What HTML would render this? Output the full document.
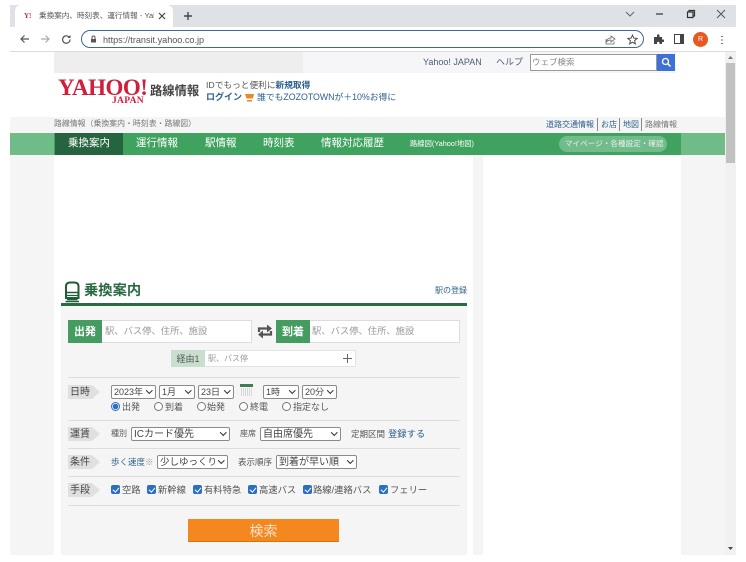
<!DOCTYPE html>
<html lang="ja"><head><meta charset="utf-8"><title>乗換案内</title>
<style>
html,body{margin:0;padding:0;background:#fff}
#p{position:relative;width:746px;height:562px;overflow:hidden;background:#fff;font-family:"Liberation Sans","Noto Sans CJK JP",sans-serif;color:#555;filter:blur(.3px)}
#p div,#p span.t,#p svg{position:absolute}
.t{position:absolute;white-space:nowrap;line-height:14px;font-size:9px;height:14px}
.l{color:#2b5f8e}
.s{background:#fff;border:1px solid #8a8a8a;border-radius:2px;box-sizing:border-box;height:14px;font-size:9px;line-height:13px;padding-left:2px;color:#444;white-space:nowrap;overflow:hidden}
.s:after{content:"";position:absolute;right:4px;top:2px;width:3.500px;height:3.500px;border-right:1.500px solid #333;border-bottom:1.500px solid #333;transform:rotate(45deg)}
.w{font-size:10px}
.tag{background:#e0e0e0;height:14px;width:24px;left:68px;font-size:10px;line-height:15px;text-align:center;color:#444}
.tag:after{content:"";position:absolute;left:24px;top:0;border-left:8px solid #e0e0e0;border-top:7px solid transparent;border-bottom:7px solid transparent}
.hr{left:68px;width:392px;height:1px;background:#dcdcdc}
.r{width:7px;height:7px;border:1px solid #777;border-radius:50%;background:#fff;top:402px;box-sizing:content-box}
.c{width:9px;height:9px;background:#2a6fc4;border-radius:2px;top:485px}
.c:after{content:"";position:absolute;left:3px;top:1px;width:2.500px;height:5px;border-right:1.500px solid #fff;border-bottom:1.500px solid #fff;transform:rotate(40deg)}
.n{color:#fff;font-size:10.500px;top:136px;line-height:14px}
</style></head><body><div id="p">

<!-- chrome -->
<div style="left:10px;top:5px;width:726px;height:22px;background:#dee1e6"></div>
<div style="left:15px;top:5px;width:158px;height:22px;background:#fff;border-radius:6px 6px 0 0"></div>
<span class="t" style="left:24px;top:9px;font:bold 7px/14px 'Liberation Serif',serif;color:#d3203d">Y!</span>
<span class="t" style="left:39px;top:9px;font-size:7.600px;color:#555;width:115px;overflow:hidden">乗換案内、時刻表、運行情報 - Yal</span>
<svg style="left:158px;top:12px" width="8" height="8"><path d="M1 1L7 7M7 1L1 7" stroke="#444" stroke-width="1.200"/></svg>
<svg style="left:183px;top:11px" width="10" height="10"><path d="M5 1V9M1 5H9" stroke="#444" stroke-width="1.400"/></svg>
<svg style="left:625px;top:10px" width="10" height="8"><path d="M1 2L5 6L9 2" stroke="#666" fill="none"/></svg>
<svg style="left:655px;top:10px" width="10" height="8"><path d="M1 4H8" stroke="#333" stroke-width="1.200"/></svg>
<svg style="left:686px;top:9px" width="10" height="10"><path d="M1.500 3H7V8.500H1.500ZM3 3V1.500H8.500V7H7" stroke="#333" fill="none" stroke-width="1.200"/></svg>
<svg style="left:716px;top:9px" width="10" height="10"><path d="M1 1L9 9M9 1L1 9" stroke="#555" stroke-width="1"/></svg>

<div style="left:10px;top:27px;width:726px;height:24px;background:#fff;border-bottom:1px solid #dadce0"></div>
<svg style="left:19px;top:34px" width="11" height="10"><path d="M10 5H2M5.500 1.500L2 5L5.500 8.500" stroke="#555" stroke-width="1.200" fill="none"/></svg>
<svg style="left:40px;top:34px" width="11" height="10"><path d="M1 5H9M5.500 1.500L9 5L5.500 8.500" stroke="#aaa" stroke-width="1.200" fill="none"/></svg>
<svg style="left:61px;top:34px" width="11" height="11"><path d="M9 5.500A3.700 3.700 0 1 1 7.900 2.900" stroke="#555" stroke-width="1.200" fill="none"/><path d="M9.500 1V4H6.500Z" fill="#555"/></svg>
<div style="left:81px;top:30px;width:563px;height:18px;box-sizing:border-box;border:1.300px solid #3d6a8e;border-radius:9px;background:#fff"></div>
<svg style="left:90px;top:35px" width="7" height="8"><path d="M1 4H6V7.500H1Z" fill="#555"/><path d="M2 4V2.500A1.500 1.500 0 0 1 5 2.500V4" stroke="#555" fill="none"/></svg>
<span class="t" style="left:103px;top:33px;font-size:9.100px;color:#555">https://transit.yahoo.co.jp</span>
<svg style="left:605px;top:34px" width="11" height="11"><path d="M6 2L10 5L6 8V6C4 6 2.500 6.500 1.500 8C1.800 5.500 3.500 4 6 4Z" stroke="#666" fill="none" stroke-width=".8"/><path d="M1 5V10H9V7.500" stroke="#666" fill="none" stroke-width=".8"/></svg>
<svg style="left:627px;top:34px" width="11" height="11"><path d="M5.500 1L6.800 4.100L10.200 4.400L7.600 6.600L8.400 9.900L5.500 8.200L2.600 9.900L3.400 6.600L.8 4.400L4.200 4.100Z" stroke="#444" fill="none" stroke-width=".9"/></svg>
<svg style="left:653px;top:34px" width="11" height="11"><path d="M1 3H4V1.500A1.200 1.200 0 0 1 6.500 1.500V3H9V5.500H10.200A1.200 1.200 0 0 1 10.200 8H9V10H6.500V9A1.200 1.200 0 0 0 4 9V10H1Z" fill="#444"/></svg>
<svg style="left:674px;top:34px" width="11" height="10"><path d="M.5.5H9.500V9.500H.5Z" stroke="#444" fill="none"/><path d="M6 .5H9.500V9.500H6Z" fill="#444"/></svg>
<div style="left:693px;top:32px;width:15px;height:15px;border-radius:50%;background:#e8591f;color:#fff;font-size:7px;line-height:15px;text-align:center">R</div>
<svg style="left:720px;top:35px" width="4" height="10"><path d="M2 1V2M2 4.500V5.500M2 8V9" stroke="#444" stroke-width="1.500"/></svg>

<!-- page backgrounds -->
<div style="left:10px;top:155px;width:44px;height:400px;background:#f5f5f5"></div>
<div style="left:473px;top:155px;width:10px;height:400px;background:#f5f5f5"></div>
<div style="left:681px;top:155px;width:44px;height:400px;background:#f5f5f5"></div>
<div style="left:54px;top:52px;width:249px;height:21px;background:#eeeeee"></div>
<div style="left:303px;top:52px;width:373px;height:21px;background:#f6f6f8"></div>
<!-- scrollbar -->
<div style="left:725px;top:52px;width:11px;height:503px;background:#f1f1f1"></div>
<div style="left:726px;top:63px;width:9px;height:100px;background:#c1c1c1"></div>
<svg style="left:727px;top:55px" width="7" height="5"><path d="M3.500 1L6 4H1Z" fill="#777"/></svg>
<svg style="left:727px;top:546px" width="7" height="5"><path d="M3.500 4L6 1H1Z" fill="#444"/></svg>

<!-- top links -->
<span class="t" style="left:423px;top:55px;font-size:9px;color:#4b5e73">Yahoo! JAPAN</span>
<span class="t" style="left:496px;top:55px;font-size:9px;color:#4b5e73">ヘルプ</span>
<div style="left:530px;top:54px;width:127px;height:17px;box-sizing:border-box;border:1px solid #999;background:#fff"></div>
<span class="t" style="left:532px;top:55px;font-size:8.500px;color:#888">ウェブ検索</span>
<div style="left:657px;top:54px;width:18px;height:17px;background:#3f6fd9"></div>
<svg style="left:661px;top:57px" width="11" height="11"><circle cx="4.500" cy="4.500" r="3" stroke="#fff" stroke-width="1.300" fill="none"/><path d="M6.800 6.800L9.500 9.500" stroke="#fff" stroke-width="1.500"/></svg>

<!-- logo -->
<span class="t" style="left:58px;top:75px;height:26px;font:bold 23px/26px 'Liberation Serif',serif;color:#d01f3c;letter-spacing:-.5px">YAHOO!</span>
<span class="t" style="left:112px;top:94px;font:bold 9.500px/14px 'Liberation Serif',serif;color:#d01f3c;letter-spacing:.3px">JAPAN</span>
<span class="t" style="left:150px;top:84px;font-size:12.300px;font-weight:bold;color:#444">路線情報</span>
<span class="t" style="left:206px;top:78px;font-size:8.700px;color:#555">IDでもっと便利に<span class="l" style="font-weight:bold">新規取得</span></span>
<span class="t" style="left:206px;top:90px;font-size:9px;color:#2b5f8e;font-weight:bold">ログイン</span>
<svg style="left:245px;top:93px" width="9" height="9"><path d="M0 1H9L8 5.500H1.500Z" fill="#e88a2a"/><path d="M2 7H7V8.500H2Z" fill="#e88a2a"/></svg>
<span class="t" style="left:257px;top:90px;font-size:8.800px;color:#2b5f8e">誰でもZOZOTOWNが＋10%お得に</span>

<!-- breadcrumb -->
<div style="left:10px;top:117px;width:715px;height:16px;background:#f5f5f5"></div>
<span class="t" style="left:54px;top:117px;font-size:7.900px;color:#777">路線情報（乗換案内・時刻表・路線図）</span>
<span class="t" style="left:546px;top:118px;font-size:8px;color:#2b5f8e">道路交通情報</span>
<div style="left:597px;top:118px;width:1px;height:13px;background:#888"></div>
<span class="t" style="left:601px;top:118px;font-size:8px;color:#2b5f8e">お店</span>
<div style="left:619px;top:118px;width:1px;height:13px;background:#888"></div>
<span class="t" style="left:623px;top:118px;font-size:8px;color:#2b5f8e">地図</span>
<div style="left:641px;top:118px;width:1px;height:13px;background:#888"></div>
<span class="t" style="left:645px;top:118px;font-size:8px;color:#777">路線情報</span>

<!-- nav -->
<div style="left:10px;top:133px;width:715px;height:22px;background:#6fbc89"></div>
<div style="left:54px;top:133px;width:627px;height:22px;background:#3fa25f"></div>
<div style="left:55px;top:133px;width:68px;height:22px;background:#26633f"></div>
<span class="t n" style="left:68px">乗換案内</span>
<span class="t n" style="left:136px">運行情報</span>
<span class="t n" style="left:205px">駅情報</span>
<span class="t n" style="left:263px">時刻表</span>
<span class="t n" style="left:321px">情報対応履歴</span>
<span class="t" style="left:410px;top:137px;font-size:7.300px;color:#fff">路線図(Yahoo!地図)</span>
<div style="left:559px;top:136px;width:108px;height:16px;border-radius:8px;background:#72bb8b"></div>
<span class="t" style="left:565px;top:137px;font-size:7.600px;color:#e8f3ec">マイページ・各種設定・確認</span>

<!-- heading -->
<svg style="left:64px;top:281px" width="17" height="22"><path d="M2 17V5.500Q2 1.500 6 1.500H10.500Q14.500 1.500 14.500 5.500V17Z" stroke="#1f5c38" stroke-width="2" fill="none"/><path d="M2 11.500H14.500" stroke="#1f5c38" stroke-width="1.500"/><path d="M2 14.500H14.500" stroke="#1f5c38" stroke-width="1.200"/><path d="M3 18.500H13.500M1.500 20.500H15" stroke="#1f5c38" stroke-width="1.500"/></svg>
<span class="t" style="left:84px;top:283px;height:16px;line-height:16px;font-size:14.300px;font-weight:bold;color:#2a6a43">乗換案内</span>
<span class="t" style="left:435px;top:284px;font-size:8px;color:#2b5f8e">駅の登録</span>
<div style="left:61px;top:303px;width:406px;height:3px;background:#2c6a44"></div>

<!-- form panel -->
<div style="left:61px;top:306px;width:406px;height:249px;background:#f5f5f5"></div>

<div style="left:68px;top:320px;width:34px;height:23px;background:#459c60;color:#fff;font-size:11px;font-weight:bold;line-height:24px;text-align:center">出発</div>
<div style="left:102px;top:320px;width:150px;height:23px;box-sizing:border-box;background:#fff;border:1px solid #ddd;border-left:0"></div>
<span class="t" style="left:105px;top:324px;font-size:9.300px;color:#999">駅、バス停、住所、施設</span>
<svg style="left:257px;top:323px" width="16" height="17"><path d="M2 9V5.500H13M14 8V11.500H3" stroke="#555" stroke-width="2.200" fill="none"/><path d="M10 1.500L15 5.500L10 9.500Z" fill="#555"/><path d="M6 7.500L1 11.500L6 15.500Z" fill="#555"/></svg>
<div style="left:276px;top:320px;width:34px;height:23px;background:#459c60;color:#fff;font-size:11px;font-weight:bold;line-height:24px;text-align:center">到着</div>
<div style="left:310px;top:320px;width:150px;height:23px;box-sizing:border-box;background:#fff;border:1px solid #ddd;border-left:0"></div>
<span class="t" style="left:312px;top:324px;font-size:9.300px;color:#999">駅、バス停、住所、施設</span>

<div style="left:171px;top:350px;width:34px;height:17px;background:#c9dfcd;color:#555;font-size:9px;line-height:18px;text-align:center">経由1</div>
<div style="left:205px;top:350px;width:151px;height:17px;box-sizing:border-box;background:#fff;border:1px solid #e2e2e2;border-left:0"></div>
<span class="t" style="left:208px;top:352px;font-size:8px;color:#999">駅、バス停</span>
<svg style="left:342px;top:353px" width="11" height="11"><path d="M5.500 1V10M1 5.500H10" stroke="#666"/></svg>

<div class="hr" style="top:377px"></div>
<div class="tag" style="top:385px">日時</div>
<div class="s" style="left:111px;top:385px;width:45px">2023年</div>
<div class="s" style="left:159px;top:385px;width:36px">1月</div>
<div class="s" style="left:198px;top:385px;width:36px">23日</div>
<svg style="left:240px;top:384px" width="14" height="14"><rect width="13" height="3" fill="#3f7d55"/><path d="M1 5H12M1 7H12M1 9H12M1 11H12" stroke="#bbb" stroke-dasharray="1 1"/></svg>
<div class="s" style="left:263px;top:385px;width:36px">1時</div>
<div class="s" style="left:302px;top:385px;width:35px">20分</div>

<div class="r" style="left:111px;border-color:#2a6fc4;background:radial-gradient(circle,#2a6fc4 0 2.500px,#fff 3px)"></div>
<span class="t" style="left:122px;top:400px;font-size:9px">出発</span>
<div class="r" style="left:154px"></div><span class="t" style="left:165px;top:400px;font-size:9px">到着</span>
<div class="r" style="left:197px"></div><span class="t" style="left:207px;top:400px;font-size:9px">始発</span>
<div class="r" style="left:239px"></div><span class="t" style="left:250px;top:400px;font-size:9px">終電</span>
<div class="r" style="left:282px"></div><span class="t" style="left:293px;top:400px;font-size:9px">指定なし</span>

<div class="hr" style="top:420px"></div>
<div class="tag" style="top:427px">運賃</div>
<span class="t" style="left:111px;top:427px;font-size:8px">種別</span>
<div class="s w" style="left:131px;top:427px;width:99px">ICカード優先</div>
<span class="t" style="left:240px;top:427px;font-size:8px">座席</span>
<div class="s w" style="left:260px;top:427px;width:81px">自由席優先</div>
<span class="t" style="left:351px;top:427px;font-size:8.500px">定期区間</span>
<span class="t l" style="left:388px;top:427px;font-size:9.300px">登録する</span>

<div class="hr" style="top:448px"></div>
<div class="tag" style="top:455px">条件</div>
<span class="t l" style="left:111px;top:455px;font-size:8.500px">歩く速度<span style="color:#999">※</span></span>
<div class="s w" style="left:157px;top:455px;width:71px;font-size:9.500px">少しゆっくり</div>
<span class="t" style="left:238px;top:455px;font-size:8.500px">表示順序</span>
<div class="s w" style="left:276px;top:455px;width:81px">到着が早い順</div>

<div class="hr" style="top:476px"></div>
<div class="tag" style="top:483px">手段</div>
<div class="c" style="left:111px"></div><span class="t" style="left:122px;top:483px;font-size:9.300px">空路</span>
<div class="c" style="left:147px"></div><span class="t" style="left:158px;top:483px;font-size:9.300px">新幹線</span>
<div class="c" style="left:193px"></div><span class="t" style="left:204px;top:483px;font-size:9.300px">有料特急</span>
<div class="c" style="left:248px"></div><span class="t" style="left:259px;top:483px;font-size:9.300px">高速バス</span>
<div class="c" style="left:303px"></div><span class="t" style="left:313px;top:483px;font-size:9.300px">路線/連絡バス</span>
<div class="c" style="left:379px"></div><span class="t" style="left:390px;top:483px;font-size:9.300px">フェリー</span>

<div class="hr" style="top:505px"></div>
<div style="left:188px;top:519px;width:151px;height:23px;background:#f5871f;border-bottom:1px solid #d97413;box-sizing:border-box;color:#f8e3cc;font-size:14px;line-height:24px;text-align:center">検索</div>

</div></body></html>
